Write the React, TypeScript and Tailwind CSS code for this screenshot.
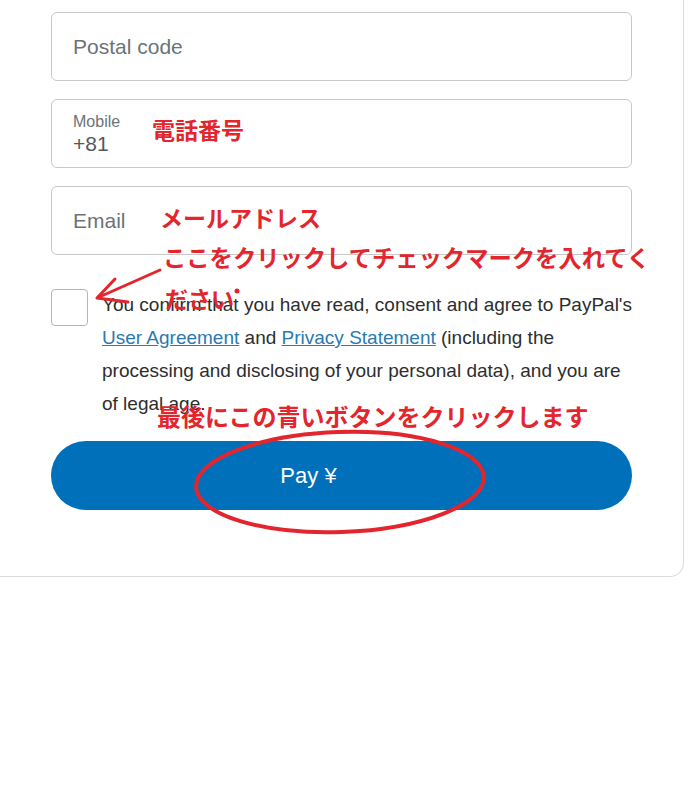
import React from "react";

const sans = { fontFamily: '"Liberation Sans", Arial, sans-serif' };

export default function App() {
  return (
    <div className="relative w-[689px] h-[793px] bg-white overflow-hidden" style={sans}>
      <div className="w-[684px] border-r border-b border-[#dcdcdc] rounded-br-[14px] pt-[12px] pb-[66px] pl-[51px] pr-[51px] flex flex-col">
        <div className="h-[69px] border border-[#c8c8c8] rounded-[6px] flex items-center px-[21px]">
          <span className="text-[21px] text-[#6c7378]">Postal code</span>
        </div>
        <div className="mt-[18px] h-[69px] border border-[#c8c8c8] rounded-[6px] flex flex-col justify-center px-[21px]">
          <span className="text-[16px] leading-[19px] text-[#6c7378]">Mobile</span>
          <span className="text-[21px] leading-[25px] text-[#55595d]">+81</span>
        </div>
        <div className="mt-[18px] h-[69px] border border-[#c8c8c8] rounded-[6px] flex items-center px-[21px]">
          <span className="text-[21px] text-[#6c7378]">Email</span>
        </div>
        <div className="mt-[34px] flex items-start gap-[14px]">
          <div className="w-[37px] h-[37px] shrink-0 border border-[#b5b5b5] rounded-[4px] bg-white" />
          <p className="w-[532px] shrink-0 text-[19px] leading-[33px] text-[#2c2e2f] -mt-[1px]">
            You confirm that you have read, consent and agree to PayPal's{" "}
            <span className="text-[#2a7ab0] underline">User Agreement</span> and{" "}
            <span className="text-[#2a7ab0] underline">Privacy Statement</span> (including the processing and
            disclosing of your personal data), and you are of legal age.
          </p>
        </div>
        <button className="mt-[21px] h-[69px] rounded-full bg-[#0070ba] text-white text-[22px] flex items-center justify-center pr-[66px]">
          Pay ¥
        </button>
      </div>

      {/* annotations */}
      <div
        className="absolute inset-0 pointer-events-none text-[#e3252d] font-bold text-[23px] leading-none"
        style={{ fontFamily: '"Noto Sans CJK JP", sans-serif' }}
      >
        <span className="absolute left-[152px] top-[118px]">電話番号</span>
        <span className="absolute left-[160px] top-[206px]">メールアドレス</span>
        <span className="absolute left-[163px] top-[246px] text-[23.3px]">ここをクリックしてチェックマークを入れてく</span>
        <span className="absolute left-[165px] top-[287px]">ださい</span>
        <span className="absolute left-[157px] top-[404px] text-[24px]">最後にこの青いボタンをクリックします</span>
        <svg className="absolute left-0 top-0" width="689" height="793">
          <circle cx="237" cy="291" r="2.5" fill="#e3252d" />
          <path d="M160 270 L97 298 M97 298 L115 279 M97 298 L128 302" stroke="#e3252d" strokeWidth="3" fill="none" strokeLinecap="round" />
          <ellipse cx="340" cy="482" rx="144" ry="50" stroke="#e3252d" strokeWidth="4" fill="none" transform="rotate(-2 340 482)" />
        </svg>
      </div>
    </div>
  );
}
